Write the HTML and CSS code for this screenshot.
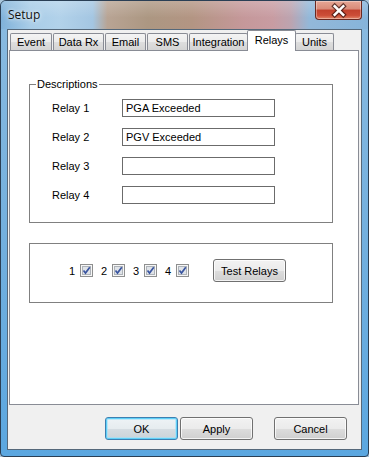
FILE: index.html
```html
<!DOCTYPE html>
<html lang="en">
<head>
    <meta charset="UTF-8">
    <title>Setup</title>
    <link rel="stylesheet" href="styles.css">
</head>
<body>
    <div class="window">
        <!-- title bar -->
        <div class="titlebar">
            <span class="title">Setup</span>
            <button class="close-btn" title="Close">
                <svg width="47" height="19" viewBox="0 0 47 19">
                    <path d="M19.5 5 L28.5 14 M28.5 5 L19.5 14" stroke="#3b1510" stroke-width="5" stroke-linecap="square" opacity="0.75"/>
                    <path d="M19.5 5 L28.5 14 M28.5 5 L19.5 14" stroke="#ffffff" stroke-width="2.6" stroke-linecap="square"/>
                </svg>
            </button>
        </div>

        <div class="client">
            <!-- tab strip -->
            <div class="tabs">
                <div class="tab tab-event">Event</div>
                <div class="tab tab-datarx">Data Rx</div>
                <div class="tab tab-email">Email</div>
                <div class="tab tab-sms">SMS</div>
                <div class="tab tab-integration">Integration</div>
                <div class="tab tab-relays active">Relays</div>
                <div class="tab tab-units">Units</div>
            </div>

            <!-- Relays page -->
            <div class="panel">
                <fieldset class="group group-desc">
                    <legend>Descriptions</legend>
                    <div class="relay-row">
                        <label class="relay-label">Relay 1</label>
                        <input class="textbox" type="text" value="PGA Exceeded">
                    </div>
                    <div class="relay-row">
                        <label class="relay-label">Relay 2</label>
                        <input class="textbox" type="text" value="PGV Exceeded">
                    </div>
                    <div class="relay-row">
                        <label class="relay-label">Relay 3</label>
                        <input class="textbox" type="text" value="">
                    </div>
                    <div class="relay-row">
                        <label class="relay-label">Relay 4</label>
                        <input class="textbox" type="text" value="">
                    </div>
                </fieldset>

                <fieldset class="group group-test">
                    <div class="relay-checks">
                        <span class="relay-check">
                            <span class="relay-num">1</span>
                            <svg class="checkbox" width="13" height="13" viewBox="0 0 13 13">
                                <rect x="0.5" y="0.5" width="12" height="12" fill="#f6f6f6" stroke="#8e8f8f"/>
                                <rect x="2.5" y="2.5" width="8" height="8" fill="#dfe3e8" stroke="#aeb3b9"/>
                                <path d="M3.5 6.5 L5.5 9 L9.8 3.2" fill="none" stroke="#3a55a0" stroke-width="1.7"/>
                            </svg>
                        </span>
                        <span class="relay-check">
                            <span class="relay-num">2</span>
                            <svg class="checkbox" width="13" height="13" viewBox="0 0 13 13">
                                <rect x="0.5" y="0.5" width="12" height="12" fill="#f6f6f6" stroke="#8e8f8f"/>
                                <rect x="2.5" y="2.5" width="8" height="8" fill="#dfe3e8" stroke="#aeb3b9"/>
                                <path d="M3.5 6.5 L5.5 9 L9.8 3.2" fill="none" stroke="#3a55a0" stroke-width="1.7"/>
                            </svg>
                        </span>
                        <span class="relay-check">
                            <span class="relay-num">3</span>
                            <svg class="checkbox" width="13" height="13" viewBox="0 0 13 13">
                                <rect x="0.5" y="0.5" width="12" height="12" fill="#f6f6f6" stroke="#8e8f8f"/>
                                <rect x="2.5" y="2.5" width="8" height="8" fill="#dfe3e8" stroke="#aeb3b9"/>
                                <path d="M3.5 6.5 L5.5 9 L9.8 3.2" fill="none" stroke="#3a55a0" stroke-width="1.7"/>
                            </svg>
                        </span>
                        <span class="relay-check">
                            <span class="relay-num">4</span>
                            <svg class="checkbox" width="13" height="13" viewBox="0 0 13 13">
                                <rect x="0.5" y="0.5" width="12" height="12" fill="#f6f6f6" stroke="#8e8f8f"/>
                                <rect x="2.5" y="2.5" width="8" height="8" fill="#dfe3e8" stroke="#aeb3b9"/>
                                <path d="M3.5 6.5 L5.5 9 L9.8 3.2" fill="none" stroke="#3a55a0" stroke-width="1.7"/>
                            </svg>
                        </span>
                    </div>
                    <button class="btn btn-test">Test Relays</button>
                </fieldset>
            </div>

            <!-- dialog buttons -->
            <div class="footer">
                <button class="btn btn-default">OK</button>
                <button class="btn btn-apply">Apply</button>
                <button class="btn btn-cancel">Cancel</button>
            </div>
        </div>
    </div>
</body>
</html>
```

FILE: styles.css
```css
* {
    margin: 0;
    padding: 0;
    box-sizing: border-box;
}

body {
    background: #a9c6dc;
    font-family: "Liberation Sans", Arial, sans-serif;
    font-size: 11px;
    color: #000;
}

/* window frame */
.window {
    width: 369px;
    height: 457px;
    display: flex;
    flex-direction: column;
    border: 1px solid #2a3f55;
    border-radius: 6px 6px 4px 4px;
    overflow: hidden;
    background: linear-gradient(180deg, #8bbbe0 0%, #74b0de 50%, #5ba7e0 100%);
}

.titlebar {
    height: 28px;
    display: flex;
    align-items: flex-start;
    background:
        linear-gradient(180deg, rgba(255,255,255,0.2) 0%, rgba(255,255,255,0) 60%),
        linear-gradient(90deg, #80b2da 0%, #a9cde8 8%, #b2d2ea 16%, #a4c6e2 25%, #b8a494 29%, #ac9782 40%, #b39583 52%, #c5989a 66%, #c89ca2 74%, #bca4b0 79%, #93b8d9 84%, #86b4da 100%);
}

.title {
    margin: 6px 0 0 7px;
    font-family: "Open Sans", "Noto Sans", sans-serif;
    font-size: 12px;
    line-height: 16px;
    color: #111;
    text-shadow: 0 0 6px rgba(255,255,255,0.9), 0 0 3px rgba(255,255,255,0.7);
}

.close-btn {
    margin-left: auto;
    margin-right: 6px;
    width: 47px;
    height: 19px;
    border: 1px solid #6a2820;
    border-top: none;
    border-radius: 0 0 4px 4px;
    background: linear-gradient(180deg, #e6a796 0%, #d88a78 45%, #c2412d 50%, #cc4e38 80%, #e3866a 100%);
    box-shadow: inset 0 0 0 1px rgba(255,255,255,0.35);
    display: flex;
    align-items: center;
    justify-content: center;
}

.close-btn svg {
    display: block;
}

/* client area */
.client {
    flex: 1;
    display: flex;
    flex-direction: column;
    margin: 0 6px 6px 6px;
    border: 1px solid #55687a;
    background: #f0f0f0;
}

/* tabs */
.tabs {
    height: 21px;
    display: flex;
    align-items: flex-end;
    padding-left: 2px;
}

.tab {
    height: 17px;
    margin-right: 1px;
    margin-bottom: 1px;
    border: 1px solid #898c95;
    border-bottom: none;
    border-radius: 2px 2px 0 0;
    background: linear-gradient(180deg, #f4f4f4 0%, #ebebeb 50%, #dedede 51%, #d4d4d4 100%);
    text-align: center;
    line-height: 16px;
    white-space: nowrap;
}

.tab-event { width: 42px; }
.tab-datarx { width: 51px; }
.tab-email { width: 41px; }
.tab-sms { width: 41px; }
.tab-integration { width: 59px; }
.tab-units { width: 39px; }

.tab.active {
    position: relative;
    z-index: 1;
    width: 49px;
    height: 21px;
    margin: 0 -1px 0 -2px;
    background: #fff;
    line-height: 18px;
}

.panel {
    flex: 1;
    margin: -1px 2px 0 1px;
    border: 1px solid #898c95;
    background: #fff;
}

/* group boxes */
.group {
    width: 304px;
    margin-left: 19px;
    border: 1px solid #808080;
    min-inline-size: 0;
}

.group-desc {
    margin-top: 27px;
    padding: 8px 0 18px 6px;
}

.group-desc legend {
    padding: 0 1px;
    line-height: 13px;
}

.relay-row {
    display: flex;
    align-items: center;
    height: 18px;
    padding-left: 16px;
    margin-bottom: 11px;
}

.relay-row:last-child {
    margin-bottom: 0;
}

.relay-label {
    width: 70px;
}

.textbox {
    width: 153px;
    height: 18px;
    border: 1px solid #6b6b6b;
    padding: 0 3px;
    font-family: "Liberation Sans", Arial, sans-serif;
    font-size: 11px;
    color: #000;
    background: #fff;
    outline: none;
}

.group-test {
    margin-top: 20px;
    padding: 15px 0 20px 39px;
    display: flex;
    align-items: center;
}

.relay-checks {
    display: flex;
    align-items: center;
}

.relay-check {
    display: flex;
    align-items: center;
    margin-right: 8px;
}

.relay-check:last-child {
    margin-right: 0;
}

.relay-num {
    width: 7px;
    margin-right: 4px;
}

.checkbox {
    display: block;
}

/* push buttons */
.btn {
    width: 73px;
    height: 23px;
    border: 1px solid #707070;
    border-radius: 3px;
    background: linear-gradient(180deg, #f2f2f2 0%, #ebebeb 50%, #dddddd 51%, #cfcfcf 100%);
    box-shadow: inset 0 0 0 1px rgba(255,255,255,0.75);
    font-family: "Liberation Sans", Arial, sans-serif;
    font-size: 11px;
    color: #000;
}

.btn-test {
    margin-left: 24px;
}

.footer {
    height: 44px;
    display: flex;
    align-items: flex-start;
    justify-content: flex-end;
    padding: 12px 14px 0 0;
}

.btn-default {
    border-color: #3c7fb1;
    box-shadow: inset 0 0 0 1px #5fd0f8, inset 0 0 0 2px rgba(160,225,250,0.6);
    background: linear-gradient(180deg, #eef3f6 0%, #e6ecef 50%, #d6dde2 51%, #cbd3d8 100%);
}

.btn-apply {
    margin-left: 2px;
}

.btn-cancel {
    margin-left: 21px;
}
```
